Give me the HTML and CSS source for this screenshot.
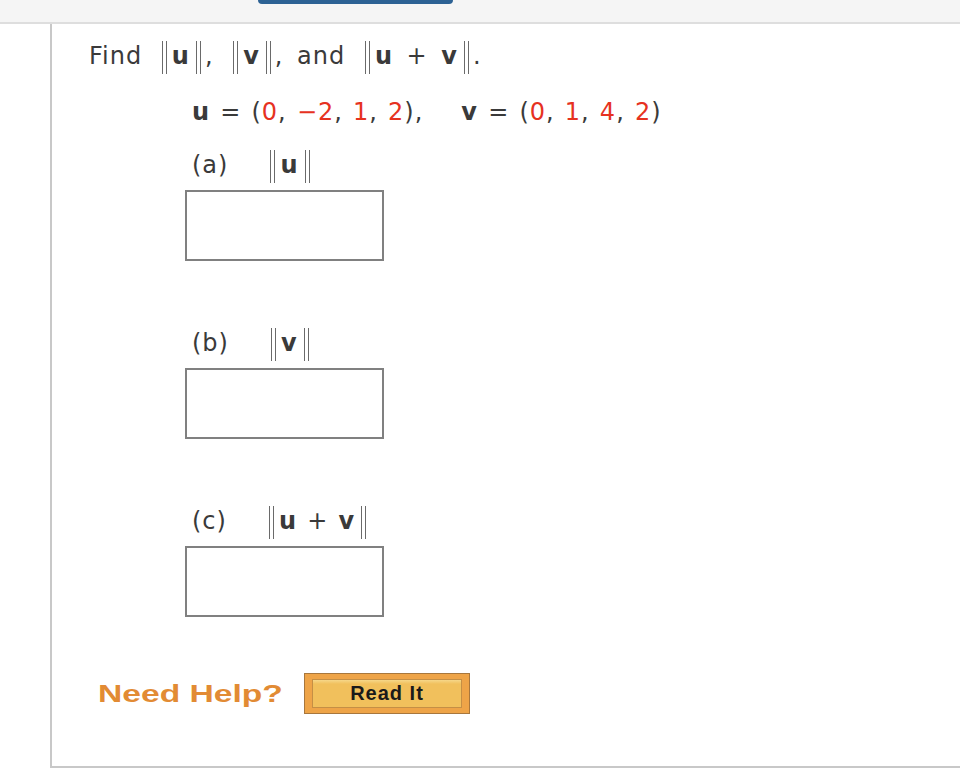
FILE: index.html
```html
<!DOCTYPE html>
<html>
<head>
<meta charset="utf-8">
<link rel="stylesheet" href="styles.css">
</head>
<body>
<header class="topbar"><div class="tab"></div></header>
<main class="panel">
  <p class="question">Find <span class="bar bar-l"></span><b>u</b><span class="bar bar-r"></span>, <span class="bar bar-l"></span><b>v</b><span class="bar bar-r"></span>, and <span class="bar bar-l"></span><b>u</b> + <b>v</b><span class="bar bar-r"></span>.</p>
  <p class="given"><b>u</b> = (<span class="red">0</span>, <span class="red">−2</span>, <span class="red">1</span>, <span class="red">2</span>),<span class="sep"></span><b>v</b> = (<span class="red">0</span>, <span class="red">1</span>, <span class="red">4</span>, <span class="red">2</span>)</p>
  <div class="part part-a">
    <p class="label"><span class="letter">(a)</span><span class="bar bar-l"></span><b>u</b><span class="bar bar-r"></span></p>
    <div class="answer"></div>
  </div>
  <div class="part">
    <p class="label"><span class="letter">(b)</span><span class="bar bar-l"></span><b>v</b><span class="bar bar-r"></span></p>
    <div class="answer"></div>
  </div>
  <div class="part">
    <p class="label"><span class="letter">(c)</span><span class="bar bar-l"></span><b>u</b> + <b>v</b><span class="bar bar-r"></span></p>
    <div class="answer"></div>
  </div>
  <div class="help">
    <span class="need"><span class="need-text">Need Help?</span></span>
    <button class="readit"><span class="readit-inner">Read It</span></button>
  </div>
</main>
</body>
</html>
```
FILE: styles.css
```css
html, body {
  margin: 0;
  padding: 0;
  background: #ffffff;
}
body {
  width: 960px;
  height: 780px;
  overflow: hidden;
  font-family: "DejaVu Sans", Verdana, sans-serif;
  color: #3a3a3a;
}
.topbar {
  height: 22px;
  background: #f5f5f5;
  border-bottom: 2px solid #dedede;
  position: relative;
}
.tab {
  position: absolute;
  left: 258px;
  top: 0;
  width: 195px;
  height: 4px;
  background: #2d6294;
  border-radius: 0 0 5px 5px;
}
.panel {
  margin-left: 50px;
  height: 744px;
  border-left: 2px solid #c8c8c8;
  border-bottom: 2px solid #c8c8c8;
  padding-left: 37px;
  box-sizing: border-box;
  padding-top: 16px;
  font-size: 24px;
  letter-spacing: 1px;
  word-spacing: 1.5px;
}
p {
  margin: 0;
  line-height: 32px;
}
.question {
  height: 32px;
  word-spacing: 5px;
}
.given {
  margin-top: 24px;
  margin-left: 103px;
}
.red {
  color: #e6321f;
}
.sep {
  display: inline-block;
  width: 38px;
}
b {
  font-weight: bold;
  color: #3a3a3a;
}
.bar {
  display: inline-block;
  width: 3px;
  height: 33px;
  border-left: 1.5px solid #6a6a6a;
  border-right: 1.5px solid #6a6a6a;
  vertical-align: -10px;
}
.bar-l {
  margin: 0 5px 0 6px;
}
.bar-r {
  margin: 0 4px 0 6px;
}
.part {
  margin-left: 96px;
  margin-top: 66px;
}
.part-a {
  margin-top: 21px;
}
.label {
  margin-left: 7px;
}
.letter {
  display: inline-block;
  margin-right: 36px;
}
.answer {
  margin-top: 7px;
  width: 199px;
  height: 71px;
  box-sizing: border-box;
  border: 2px solid #808080;
  background: #fff;
}
.help {
  margin-top: 56px;
  margin-left: 9px;
  display: flex;
  align-items: center;
  gap: 20px;
  letter-spacing: 0;
  word-spacing: 0;
}
.need {
  display: inline-block;
  width: 186px;
  height: 30px;
}
.need-text {
  display: inline-block;
  font-family: "Liberation Sans", Arial, sans-serif;
  font-weight: bold;
  font-size: 24px;
  line-height: 30px;
  color: #e28b34;
  transform: scaleX(1.4);
  transform-origin: left center;
  white-space: nowrap;
}
.readit {
  width: 166px;
  height: 41px;
  box-sizing: border-box;
  padding: 5px 7px;
  background: #eea448;
  border: 1px solid #a8773d;
  margin: 0;
  display: flex;
}
.readit-inner {
  flex: 1;
  box-sizing: border-box;
  border: 1px solid #c58f45;
  background: linear-gradient(#f6d789 0, #f1c05c 4px, #f1c05c 100%);
  font-family: "Liberation Sans", Arial, sans-serif;
  font-weight: bold;
  font-size: 20px;
  color: #1a1a1a;
  display: flex;
  align-items: center;
  justify-content: center;
  letter-spacing: 1px;
}
```
